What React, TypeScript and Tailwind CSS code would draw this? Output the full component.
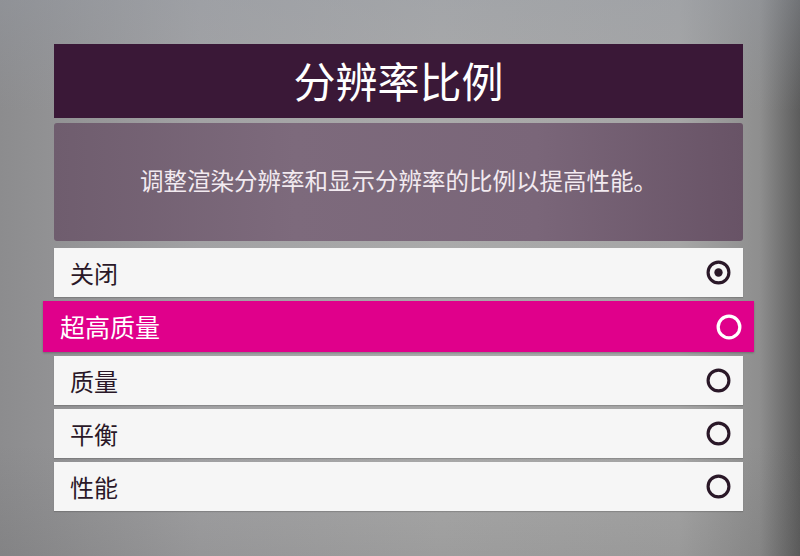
import React from "react";

const options = ["关闭", "超高质量", "质量", "平衡", "性能"];

function Radio({ checked, light, size }: { checked: boolean; light: boolean; size: number }) {
  const c = light ? "#ffffff" : "#2a1828";
  return (
    <svg width={size} height={size} viewBox="0 0 24 24">
      <circle cx="12" cy="12" r="10" fill="none" stroke={c} strokeWidth="3" />
      {checked && <circle cx="12" cy="12" r="4" fill={c} />}
    </svg>
  );
}

export default function App() {
  return (
    <div
      className="w-[800px] h-[556px] overflow-hidden bg-[linear-gradient(90deg,#8c8c8e_0%,#a2a2a4_25%,#aaaaaa_55%,#a6a6a6_85%,#8e8e8e_95%,#5c5c5c_100%)]"
      style={{ fontFamily: '"Noto Sans CJK SC", "Noto Sans", sans-serif' }}
    >
      <div className="w-full h-full bg-[linear-gradient(180deg,rgba(150,156,166,0.35)_0%,rgba(0,0,0,0)_20%,rgba(0,0,0,0)_80%,rgba(80,80,80,0.15)_100%)] pt-[44px] pl-[54px] pr-[57px] flex flex-col">
        <div className="h-[74px] bg-[#3a1837] flex items-center justify-center pb-[2px]">
          <span className="text-white text-[42px] leading-none">分辨率比例</span>
        </div>
        <div className="mt-[5px] h-[118px] rounded-[3px] bg-[linear-gradient(90deg,#6f5d6e_0%,#7d6a7c_35%,#7a6679_70%,#685366_100%)] flex items-center justify-center pb-[2px]">
          <span className="text-[#f2eaf0] text-[23.5px] leading-none">调整渲染分辨率和显示分辨率的比例以提高性能。</span>
        </div>
        <div className="mt-[7px] flex flex-col gap-[4px]">
          {options.map((o, i) => {
            const sel = i === 1;
            return sel ? (
              <div
                key={o}
                className="-mx-[11px] h-[51px] bg-[#e0008b] flex items-center justify-between pl-[17px] pr-[12px] shadow-[0_1px_2px_rgba(0,0,0,0.25)]"
              >
                <span className="text-white text-[25px] leading-none">{o}</span>
                <Radio checked={false} light={true} size={26} />
              </div>
            ) : (
              <div
                key={o}
                className="h-[49px] bg-[#f6f6f6] flex items-center justify-between pl-[16px] pr-[12px] shadow-[0_1px_1px_rgba(0,0,0,0.15)]"
              >
                <span className="text-[#2a1828] text-[24px] leading-none">{o}</span>
                <Radio checked={i === 0} light={false} size={25} />
              </div>
            );
          })}
        </div>
      </div>
    </div>
  );
}
